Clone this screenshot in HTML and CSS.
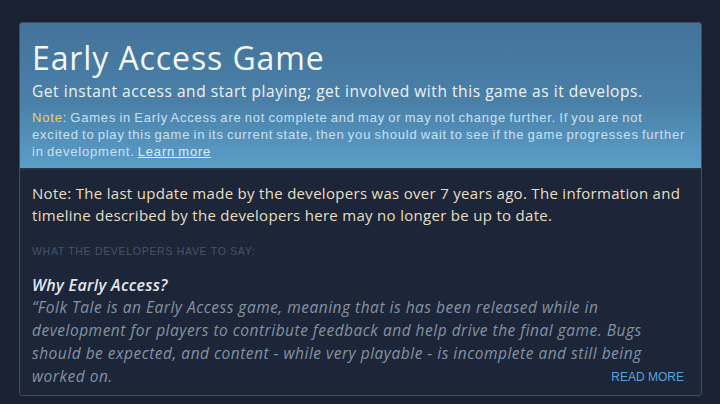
FILE: index.html
```html
<!DOCTYPE html>
<html>
<head>
<meta charset="utf-8">
<link rel="stylesheet" href="styles.css">
</head>
<body>
<div class="box">
  <div class="top">
    <h1 class="title">Early Access Game</h1>
    <p class="sub">Get instant access and start playing; get involved with this game as it develops.</p>
    <p class="note"><span class="note-label">Note</span>: Games in Early Access are not complete and may or may not change further. If you are not excited to play this game in its current state, then you should wait to see if the game progresses further in development. <a class="learn" href="#">Learn more</a></p>
  </div>
  <div class="bottom">
    <p class="warn">Note: The last update made by the developers was over 7 years ago. The information and timeline described by the developers here may no longer be up to date.</p>
    <div class="label">What the developers have to say:</div>
    <h2 class="q">Why Early Access?</h2>
    <p class="quote">“Folk Tale is an Early Access game, meaning that is has been released while in development for players to contribute feedback and help drive the final game. Bugs should be expected, and content - while very playable - is incomplete and still being worked on.</p>
    <div class="more-row"><a class="more" href="#">READ MORE</a></div>
  </div>
</div>
</body>
</html>
```
FILE: styles.css
```css
html, body {
  margin: 0;
  padding: 0;
  background: #1a2232;
  width: 720px;
  height: 404px;
  overflow: hidden;
}
.box {
  margin: 22px 0 0 19px;
  width: 683px;
  height: 374px;
  box-sizing: border-box;
  border: 1px solid #3a5068;
  border-radius: 3px;
  background: #1c2638;
  overflow: hidden;
  display: flex;
  flex-direction: column;
}
.top {
  background: linear-gradient(180deg, #44739a 0%, #4a80a8 55%, #5b9ec8 100%);
  padding: 15px 13px 0 12px;
  height: 147px;
  flex: none;
  box-sizing: border-box;
  border-bottom: 2px solid #22344a;
}
.title {
  margin: 0;
  font-family: "Open Sans", sans-serif;
  font-weight: 400;
  font-size: 32px;
  letter-spacing: 0.9px;
  line-height: 40px;
  color: #f4f7fa;
}
.sub {
  margin: 2px 0 0 0;
  font-family: "Open Sans", sans-serif;
  font-size: 15.5px;
  letter-spacing: 0.55px;
  line-height: 22px;
  color: #eef3f7;
}
.note {
  margin: 7px 0 0 0;
  font-family: "Liberation Sans", Arial, sans-serif;
  font-size: 13px;
  letter-spacing: 0.8px;
  word-spacing: -1.2px;
  line-height: 17px;
  color: #c9e0f0;
}
.note-label {
  color: #e6d25a;
}
.learn {
  color: #dcecf7;
  text-decoration: underline;
}
.bottom {
  padding: 12px 12px 0 12px;
  flex: 1;
}
.warn {
  margin: 0;
  font-family: "Open Sans", sans-serif;
  font-size: 15px;
  letter-spacing: 0.3px;
  line-height: 22px;
  color: #e8dec4;
}
.label {
  margin-top: 18px;
  font-family: "Liberation Sans", Arial, sans-serif;
  font-size: 10.5px;
  letter-spacing: 0.7px;
  text-transform: uppercase;
  color: #445468;
  line-height: 14px;
}
.q {
  margin: 16px 0 0 0;
  font-family: "Open Sans", sans-serif;
  font-style: italic;
  font-weight: 600;
  font-size: 16px;
  letter-spacing: 0.3px;
  line-height: 22px;
  color: #e3e8ee;
}
.quote {
  margin: 0;
  font-family: "Open Sans", sans-serif;
  font-style: italic;
  font-size: 15.5px;
  letter-spacing: 0.5px;
  line-height: 23px;
  color: #8592a3;
}
.more-row {
  display: flex;
  justify-content: flex-end;
  margin-top: -18px;
  padding-right: 5px;
}
.more {
  font-family: "Liberation Sans", Arial, sans-serif;
  font-size: 12px;
  color: #5aa4d8;
  text-decoration: none;
}
```
